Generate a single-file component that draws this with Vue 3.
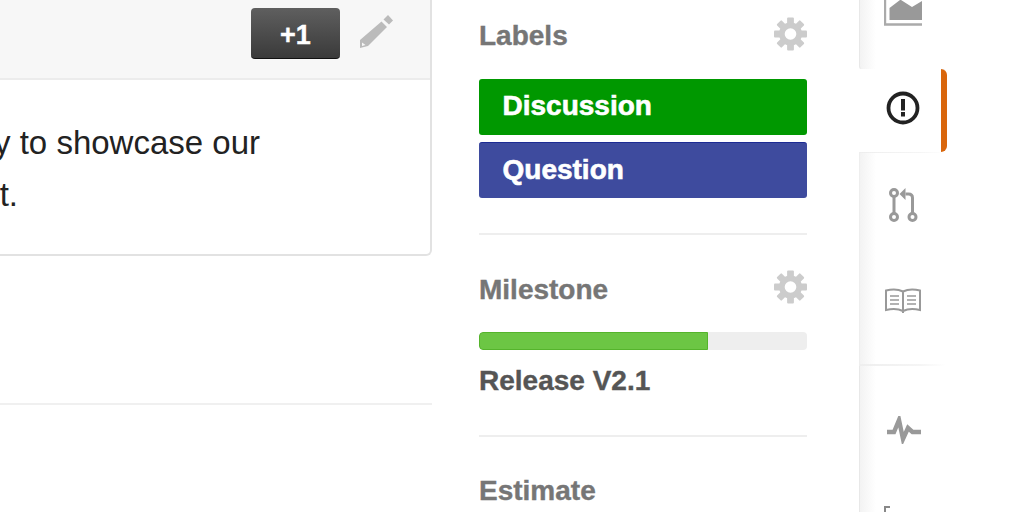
<script setup>
const teeth = [0, 45, 90, 135, 180, 225, 270, 315]
</script>

<template>
  <div class="page">
    <main class="main">
      <section class="card">
        <header class="card-head">
          <button class="plus">+1</button>
          <svg class="pencil" width="34" height="34" viewBox="0 0 34 34">
            <path d="M28 0l5 5.500-4 4-5.500-5z" fill="#bbb" />
            <path fill-rule="evenodd" d="M21.500 6.500l5.500 5.500L8 31l-8 2v-8zM2 27.500V31l3.500-1z" fill="#bbb" />
          </svg>
        </header>
        <div class="card-body">
          <p class="line first"><span>way to showcase our</span></p>
          <p class="line second"><span>product.</span></p>
        </div>
      </section>
      <hr class="main-rule" />
    </main>

    <aside class="side">
      <section class="block labels">
        <div class="block-head">
          <h3>Labels</h3>
          <svg class="gear" width="33" height="34" viewBox="-16.500 -17 33 34">
            <circle r="11.500" fill="#ccc" />
            <rect v-for="t in teeth" :key="t" x="-3.400" y="-16.500" width="6.800" height="7" rx="1" fill="#ccc" :transform="`rotate(${t})`" />
            <circle r="5.800" fill="#fff" />
          </svg>
        </div>
        <div class="label green">Discussion</div>
        <div class="label blue">Question</div>
      </section>

      <section class="block milestone">
        <div class="block-head">
          <h3>Milestone</h3>
          <svg class="gear" width="33" height="34" viewBox="-16.500 -17 33 34">
            <circle r="11.500" fill="#ccc" />
            <rect v-for="t in teeth" :key="t" x="-3.400" y="-16.500" width="6.800" height="7" rx="1" fill="#ccc" :transform="`rotate(${t})`" />
            <circle r="5.800" fill="#fff" />
          </svg>
        </div>
        <div class="progress"><div class="fill" style="width: 69.800%"></div></div>
        <div class="release">Release V2.1</div>
      </section>

      <section class="block estimate">
        <h3>Estimate</h3>
      </section>
    </aside>

    <nav class="nav">
      <div class="group top">
        <svg width="38" height="26" viewBox="0 0 38 26">
          <path d="M1 0v24.500h37" fill="none" stroke="#aaa" stroke-width="2.400" />
          <path d="M5.500 20V8L16 0h1l11 7 10-6v19z" fill="#999" />
        </svg>
      </div>
      <div class="group active">
        <svg width="34" height="34" viewBox="0 0 34 34">
          <circle cx="17" cy="17" r="14.500" fill="none" stroke="#222" stroke-width="3.800" />
          <rect x="15" y="8" width="4" height="11.500" fill="#222" />
          <rect x="15" y="21" width="4" height="4.500" fill="#222" />
        </svg>
      </div>
      <div class="group plain">
        <div class="item pull">
          <svg width="32" height="36" viewBox="0 0 32 36" fill="none" stroke="#999" stroke-width="3">
            <circle cx="6" cy="6" r="3.500" />
            <circle cx="6" cy="30" r="3.500" />
            <circle cx="24.500" cy="30" r="3.500" />
            <path d="M6 9.500v17M24.500 26.500V11q0-4-4-4h-3" />
            <path d="M17.500 1v12l-6-6z" fill="#999" stroke="none" />
          </svg>
        </div>
        <div class="item book">
          <svg width="36" height="26" viewBox="0 0 36 26" fill="none" stroke="#999" stroke-width="2">
            <path d="M1 2.500c6-1.500 12-1.500 17 1 5-2.500 11-2.500 17-1V22c-6-1.500-12-1.500-17 1-5-2.500-11-2.500-17-1zM18 3.500V25" />
            <path d="M5 8h9M5 12h9M5 16h9M22 8h9M22 12h9M22 16h9" stroke-width="1.600" />
          </svg>
        </div>
      </div>
      <div class="group lower">
        <div class="item pulse">
          <svg width="34" height="28" viewBox="0 0 34 28" fill="none" stroke="#999" stroke-width="4.400">
            <path d="M0 16h7l5-12 4 19 5-11 4.500 4H34" />
          </svg>
        </div>
        <div class="corner"></div>
      </div>
    </nav>
  </div>
</template>

<style>
html,
body {
  margin: 0;
  background: #fff;
}
</style>

<style scoped>
.page {
  width: 1024px;
  height: 512px;
  display: flex;
  overflow: hidden;
  font-family: "Liberation Sans", Arial, sans-serif;
  background: #fff;
}
.main {
  width: 432px;
  flex: none;
}
.card {
  height: 256px;
  box-sizing: border-box;
  border-right: 2px solid #e2e2e2;
  border-bottom: 2px solid #e2e2e2;
  border-bottom-right-radius: 6px;
}
.card-head {
  height: 80px;
  box-sizing: border-box;
  background: #f7f7f7;
  border-bottom: 2px solid #ececec;
  display: flex;
  justify-content: flex-end;
  align-items: flex-start;
  padding: 8px 36px 0 0;
}
.plus {
  width: 89px;
  height: 51px;
  margin-right: -1px;
  padding: 5px 0 0;
  border: 0;
  border-bottom: 1px solid #111;
  border-radius: 4px;
  background: linear-gradient(#5f5f5f, #3a3a3a);
  color: #fff;
  font: 700 27px "Liberation Sans", Arial, sans-serif;
  -webkit-text-stroke: 0.4px #fff;
}
.pencil {
  margin: 7px 0 0 21px;
}
.card-body {
  padding-top: 37px;
}
.line {
  margin: 0;
  display: flex;
  justify-content: flex-end;
  white-space: nowrap;
  font-size: 33px;
  line-height: 52px;
  color: #222;
}
.first {
  width: 260px;
}
.second {
  width: 18px;
}
.main-rule {
  margin: 147px 0 0;
  border: 0;
  height: 2px;
  background: #f0f0f0;
}
.side {
  width: 328px;
  flex: none;
  margin-left: 47px;
}
.block {
  border-bottom: 2px solid #eee;
}
.labels {
  height: 235px;
  box-sizing: border-box;
  padding-top: 18px;
}
.milestone {
  height: 202px;
  box-sizing: border-box;
  padding-top: 37px;
}
.estimate {
  border: 0;
  padding-top: 36px;
}
.block-head {
  display: flex;
  justify-content: space-between;
  align-items: flex-start;
}
.block-head .gear {
  margin-top: -1px;
}
.milestone .gear {
  margin-top: -2px;
}
h3 {
  margin: 0;
  font-size: 28px;
  line-height: 36px;
  font-weight: 700;
  color: #767676;
  -webkit-text-stroke: 0.4px #767676;
}
.label {
  height: 56px;
  box-sizing: border-box;
  padding-left: 23.500px;
  border-radius: 3px;
  color: #fff;
  font-size: 28px;
  font-weight: 700;
  line-height: 54px;
  -webkit-text-stroke: 0.6px #fff;
}
.labels .block-head {
  height: 61px;
}
.green {
  background: #009800;
}
.blue {
  margin-top: 7px;
  background: #3e4b9e;
  border-top: 1px solid #1c2b94;
}
.milestone .block-head {
  height: 60px;
}
.progress {
  height: 18px;
  background: #eee;
  border-radius: 4px;
  overflow: hidden;
}
.fill {
  height: 100%;
  box-sizing: border-box;
  background: #6cc644;
  border: 1px solid #55b42c;
  border-radius: 4px 0 0 4px;
}
.release {
  margin-top: 13px;
  font-size: 28px;
  line-height: 36px;
  font-weight: 700;
  color: #555;
  -webkit-text-stroke: 0.4px #555;
}
.nav {
  width: 88px;
  flex: none;
  margin-left: 52px;
  display: flex;
  flex-direction: column;
}
.group {
  box-sizing: border-box;
  background: linear-gradient(90deg, #f3f3f3, #fff 16px);
  border-left: 1px solid #e8e8e8;
  width: 86px;
  display: flex;
}
.top {
  height: 70px;
  padding: 0 0 0 24px;
  border-bottom-left-radius: 4px;
  border-bottom: 1px solid #f2f2f2;
}
.active {
  height: 83px;
  width: 89px;
  margin-top: -1px;
  margin-left: -1px;
  border-left: 0;
  background: #fff;
  border-right: 6px solid #d9660c;
  border-radius: 0 6px 6px 0;
  padding: 22px 0 0 28px;
}
.plain {
  flex-direction: column;
  height: 215px;
  border-top-left-radius: 4px;
  padding: 34px 0 0 24px;
  border-top: 1px solid #f4f4f4;
  border-bottom: 2px solid transparent;
  border-image: linear-gradient(90deg, #eee, #f5f5f5 70%, #fff) 1;
}
.pull {
  height: 36px;
  padding-left: 4px;
}
.pull svg,
.book svg,
.pulse svg {
  display: block;
}
.book {
  margin-top: 65px;
  margin-left: 1px;
}
.lower {
  flex: 1;
  flex-direction: column;
  padding: 0 0 0 24px;
}
.pulse {
  margin: 50px 0 0 3px;
}
.corner {
  width: 4px;
  height: 4px;
  margin-top: 62px;
  border-left: 2px solid #888;
  border-top: 2px solid #888;
}
</style>
